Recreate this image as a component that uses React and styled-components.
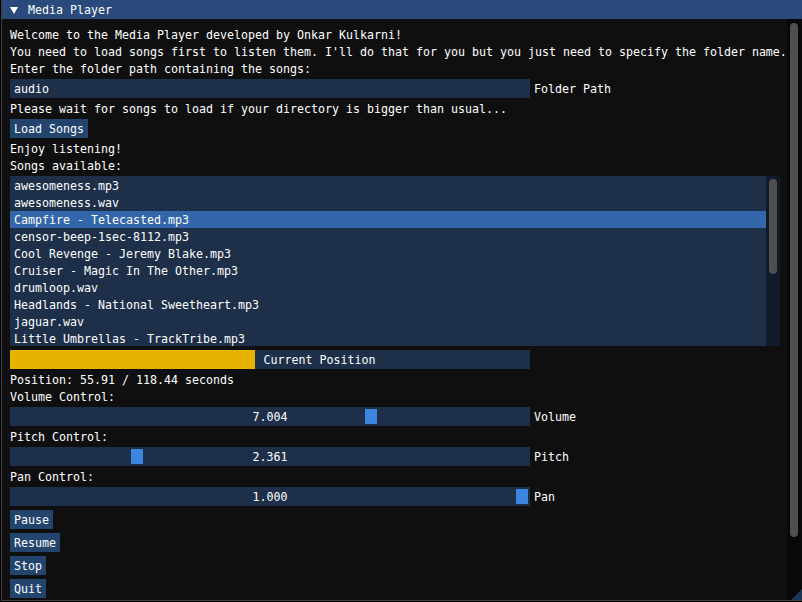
import React from 'react';
import styled, { createGlobalStyle } from 'styled-components';

const GlobalStyle = createGlobalStyle`
  html, body {
    margin: 0;
    padding: 0;
    background: #000;
  }
  body {
    font-family: "DejaVu Sans Mono", "Liberation Mono", monospace;
    font-size: 11.63px;
    line-height: 13px;
    color: #fff;
  }
`

const Window = styled.div`
  position: relative;
  margin-left: 1px;
  width: 801px;
  height: 601px;
  box-sizing: border-box;
  background: #0f0f0f;
  border-left: 1px solid #3f3f48;
  border-bottom: 1px solid #3f3f48;
  display: flex;
  flex-direction: column;
  overflow: hidden;
`

const TitleBar = styled.div`
  height: 19px;
  flex: none;
  box-sizing: border-box;
  padding-top: 1px;
  background: #294a7a;
  display: flex;
  align-items: center;
  padding-left: 8px;
`

const Arrow = styled.span`
  width: 0;
  height: 0;
  border-left: 4px solid transparent;
  border-right: 4px solid transparent;
  border-top: 7px solid #fff;
  margin-right: 10px;
`

const Body = styled.div`
  flex: 1;
  min-height: 0;
  display: flex;
`

const Content = styled.div`
  width: 770px;
  padding: 9px 7px 0 8px;
  display: flex;
  flex-direction: column;
  gap: 4px;
`

const Line = styled.div`
  height: 12px;
  padding-top: 1px;
  white-space: pre;
`

const FrameRow = styled.div`
  display: flex;
  align-items: center;
  gap: 4px;
  height: 19px;
  box-sizing: border-box;
  padding-top: 2px;
`

const Frame = styled.div`
  position: relative;
  width: 520px;
  height: 19px;
  margin-top: -2px;
  background: #1d2f49;
  display: flex;
  align-items: center;
  justify-content: ${p => (p.$center ? 'center' : 'flex-start')};
  padding-left: ${p => (p.$flush || p.$center ? 0 : 4)}px;
  padding-top: 2px;
  box-sizing: border-box;
  overflow: hidden;
  white-space: pre;
`

const Fill = styled.div`
  align-self: stretch;
  flex: none;
  margin-top: -2px;
  background: #e6b300;
  margin-right: 8px;
`

const Grab = styled.div`
  position: absolute;
  top: 2px;
  width: 12px;
  height: 15px;
  background: #3d85e0;
`

const Button = styled.div`
  align-self: flex-start;
  height: 19px;
  box-sizing: border-box;
  padding: 2px 4px 0;
  display: flex;
  align-items: center;
  background: #23456d;
  white-space: pre;
`

const ListBox = styled.div`
  width: 770px;
  height: 170px;
  background: #1d2f49;
  display: flex;
  overflow: hidden;
`

const Rows = styled.div`
  flex: 1;
  padding-top: 1px;
`

const Row = styled.div`
  height: 17px;
  box-sizing: border-box;
  display: flex;
  align-items: center;
  padding: 2px 0 0 4px;
  white-space: pre;
  background: ${p => (p.$selected ? '#3366aa' : 'transparent')};
`

const ListScroll = styled.div`
  width: 14px;
  background: #111a2a;
  padding: 3px 3px 0 3px;
  box-sizing: border-box;
`

const ScrollGrab = styled.div`
  height: ${p => p.$h}px;
  background: #4f4f4f;
  border-radius: 4px;
`

const WinScroll = styled.div`
  width: 14px;
  background: #080808;
  padding: 4px 3px 0 3px;
  box-sizing: border-box;
`

const ResizeGrip = styled.div`
  position: absolute;
  right: 0;
  bottom: 0;
  width: 11px;
  height: 11px;
  background: #1e3656;
  clip-path: polygon(100% 0, 100% 100%, 0 100%);
`

const songs = [
  'awesomeness.mp3',
  'awesomeness.wav',
  'Campfire - Telecasted.mp3',
  'censor-beep-1sec-8112.mp3',
  'Cool Revenge - Jeremy Blake.mp3',
  'Cruiser - Magic In The Other.mp3',
  'drumloop.wav',
  'Headlands - National Sweetheart.mp3',
  'jaguar.wav',
  'Little Umbrellas - TrackTribe.mp3',
  'Sunny Travel - Joel Cummins.mp3',
  'tone.wav',
];

const Slider = ({ value, min, max, label }) => {
  const t = (value - min) / (max - min);
  return (
    <FrameRow>
      <Frame $center>
        {value.toFixed(3)}
        <Grab style={{ left: 2 + t * 504 }} />
      </Frame>
      {label}
    </FrameRow>
  );
};

const App = () => {
  const position = 55.91;
  const length = 118.44;
  return (
    <>
      <GlobalStyle />
      <Window>
        <TitleBar>
          <Arrow />
          Media Player
        </TitleBar>
        <Body>
          <Content>
            <Line>Welcome to the Media Player developed by Onkar Kulkarni!</Line>
            <Line>You need to load songs first to listen them. I'll do that for you but you just need to specify the folder name.</Line>
            <Line>Enter the folder path containing the songs:</Line>
            <FrameRow>
              <Frame>audio</Frame>
              Folder Path
            </FrameRow>
            <Line>Please wait for songs to load if your directory is bigger than usual...</Line>
            <Button>Load Songs</Button>
            <Line>Enjoy listening!</Line>
            <Line>Songs available:</Line>
            <ListBox>
              <Rows>
                {songs.map((s, i) => (
                  <Row key={s} $selected={i === 2}>{s}</Row>
                ))}
              </Rows>
              <ListScroll>
                <ScrollGrab $h={95} />
              </ListScroll>
            </ListBox>
            <FrameRow>
              <Frame $flush>
                <Fill style={{ width: (position / length) * 520 }} />
                Current Position
              </Frame>
            </FrameRow>
            <Line>{`Position: ${position.toFixed(2)} / ${length.toFixed(2)} seconds`}</Line>
            <Line>Volume Control:</Line>
            <Slider value={7.004} min={0} max={10} label="Volume" />
            <Line>Pitch Control:</Line>
            <Slider value={2.361} min={0} max={10} label="Pitch" />
            <Line>Pan Control:</Line>
            <Slider value={1.0} min={-1} max={1} label="Pan" />
            <Button>Pause</Button>
            <Button>Resume</Button>
            <Button>Stop</Button>
            <Button>Quit</Button>
          </Content>
          <WinScroll>
            <ScrollGrab $h={514} />
          </WinScroll>
        </Body>
        <ResizeGrip />
      </Window>
    </>
  );
};

export default App;
